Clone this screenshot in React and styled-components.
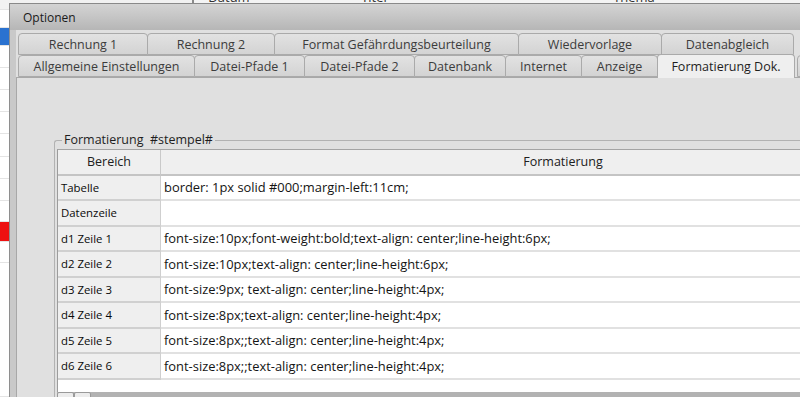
import React from 'react';
import styled, { createGlobalStyle } from 'styled-components';

const Global = createGlobalStyle`
  html, body { margin: 0; padding: 0; }
  body {
    width: 800px; height: 397px; overflow: hidden; background: #fff;
    font-family: "Open Sans", "Liberation Sans", sans-serif;
  }
  #root { width: 800px; height: 397px; position: relative; overflow: hidden; }
`;

const Desktop = styled.div`
  display: flex;
  width: 800px;
  height: 397px;
  background: #fff;
`;

const SideList = styled.div`
  width: 192px;
  display: flex;
  flex-direction: column;
  border-right: 2px solid #8a8a8a;
`;

const ListRow = styled.div`
  height: ${p => p.h}px;
  flex: none;
  box-sizing: border-box;
  background: ${p => (p.tone === 'blue' ? '#2a72d0' : p.tone === 'red' ? '#ee1111' : p.tone === 'head' ? '#f2f2f2' : '#fff')};
  border-bottom: 1px solid #e4e4e4;
`;

const MainTable = styled.div`
  flex: 1;
  display: flex;
  flex-direction: column;
`;

const MainHeader = styled.div`
  height: 4px;
  overflow: hidden;
  display: flex;
  align-items: flex-end;
  border-bottom: 1px solid #9a9a9a;
  background: #f4f4f4;
`;

const MainHeaderCell = styled.span`
  flex: none;
  width: ${p => p.w}px;
  text-align: center;
  font-size: 13px;
  line-height: 14px;
  color: #333;
`;

const Dialog = styled.div`
  position: absolute;
  left: 9px;
  top: 3px;
  width: 840px;
  height: 440px;
  display: flex;
  flex-direction: column;
  background: #e0e0e0;
  border-left: 1px solid #8e8e8e;
  border-top: 1px solid #8a8a8a;
`;

const TitleBar = styled.div`
  height: 26px;
  flex: none;
  display: flex;
  align-items: center;
  padding-left: 13px;
  background: linear-gradient(#d4d4d4, #b6b6b6);
  font-size: 12px;
  color: #1a1a1a;
`;

const DialogBody = styled.div`
  flex: 1;
  display: flex;
  flex-direction: column;
  padding-top: 3px;
  border-left: 6px solid #c9c9c9;
`;

const TabRow = styled.div`
  display: flex;
  height: 22px;
  flex: none;
  padding-left: 2px;
  align-items: flex-end;
`;

const Tab = styled.div`
  flex: none;
  box-sizing: border-box;
  width: ${p => p.w}px;
  height: ${p => (p.active ? 24 : 22)}px;
  margin-right: -1px;
  margin-bottom: ${p => (p.active ? -1 : 0)}px;
  border: 1px solid #aaaaaa;
  border-bottom: ${p => (p.active ? 'none' : '1px solid #aaaaaa')};
  border-radius: 4px 4px 0 0;
  background: ${p => (p.active ? '#efefef' : 'linear-gradient(#e2e2e2, #d3d3d3)')};
  position: relative;
  z-index: ${p => (p.active ? 2 : 1)};
  display: flex;
  align-items: center;
  justify-content: center;
  font-size: 12.5px;
  color: ${p => (p.active ? '#1e1e1e' : '#3c3c3c')};
  white-space: nowrap;
  overflow: hidden;
`;

const Spacer = styled.div`
  width: ${p => p.w}px;
  flex: none;
`;

const Pane = styled.div`
  flex: 1;
  border-top: 1px solid #a8a8a8;
  border-left: 1px solid #a8a8a8;
  background: #e0e0e0;
  padding: 54px 0 0 37px;
`;

const Group = styled.fieldset`
  margin: 0;
  padding: 1px 0 0 2px;
  border: 1px solid #b2b2b2;
  border-right: none;
  border-radius: 3px 0 0 0;
  min-width: 0;
`;

const GroupTitle = styled.legend`
  margin-left: 5px;
  padding: 0 2px;
  font-size: 12.5px;
  line-height: 16px;
  color: #1e1e1e;
  white-space: pre;
`;

const Grid = styled.div`
  width: 908px;
  display: grid;
  grid-template-columns: 103px 805px;
  grid-auto-rows: 25.5px;
  background: #fff;
  border-top: 1px solid #a4a4a4;
  border-left: 1px solid #9c9c9c;
`;

const HeadCell = styled.div`
  box-sizing: border-box;
  background: #efefef;
  border-right: 1px solid #c9c9c9;
  border-bottom: 2px solid #c4c4c4;
  display: flex;
  align-items: center;
  justify-content: center;
  font-size: 12.5px;
  color: #202020;
`;

const KeyCell = styled.div`
  box-sizing: border-box;
  background: #efefef;
  border-right: 1px solid #cfcfcf;
  border-bottom: 2px solid #d0d0d0;
  display: flex;
  align-items: center;
  padding-left: 3px;
  font-size: 11.4px;
  color: #0a0a0a;
  white-space: nowrap;
`;

const ValueCell = styled.div`
  box-sizing: border-box;
  background: #fff;
  border-bottom: 2px solid #e1e1e1;
  display: flex;
  align-items: center;
  padding-left: 3px;
  font-size: 12.9px;
  color: #141414;
  white-space: nowrap;
`;

const Filler = styled.div`
  height: 12px;
  width: 908px;
  background: #fff;
  border-left: 1px solid #9c9c9c;
`;

const ButtonBar = styled.div`
  display: flex;
  height: 20px;
  background: #b2b2b2;
  width: 909px;
`;

const SmallButton = styled.button`
  width: 17px;
  height: 20px;
  padding: 0;
  margin: 0;
  border: 1px solid #9a9a9a;
  border-radius: 2px;
  background: #ececec;
  font-family: "Open Sans", sans-serif;
  font-size: 12px;
  line-height: 12px;
  color: #222;
`;

const rows1 = [
  ['Rechnung 1', 130],
  ['Rechnung 2', 128],
  ['Format Gefährdungsbeurteilung', 245],
  ['Wiedervorlage', 144],
  ['Datenabgleich', 133],
];

const rows2 = [
  ['Allgemeine Einstellungen', 177],
  ['Datei-Pfade 1', 111],
  ['Datei-Pfade 2', 111],
  ['Datenbank', 92],
  ['Internet', 77],
  ['Anzeige', 77],
  ['Formatierung Dok.', 138, true],
];

const data = [
  ['Tabelle', 'border: 1px solid #000;margin-left:11cm;'],
  ['Datenzeile', ''],
  ['d1 Zeile 1', 'font-size:10px;font-weight:bold;text-align: center;line-height:6px;'],
  ['d2 Zeile 2', 'font-size:10px;text-align: center;line-height:6px;'],
  ['d3 Zeile 3', 'font-size:9px; text-align: center;line-height:4px;'],
  ['d4 Zeile 4', 'font-size:8px;text-align: center;line-height:4px;'],
  ['d5 Zeile 5', 'font-size:8px;;text-align: center;line-height:4px;'],
  ['d6 Zeile 6', 'font-size:8px;;text-align: center;line-height:4px;'],
];

const listRows = [
  [10, 'head'], [18], [18, 'blue'], [22], [22], [22], [22], [23], [22], [22], [21], [20, 'red'], [21], [134],
];

export default function App() {
  return (
    <>
      <Global />
      <Desktop>
        <SideList>
          {listRows.map(([h, tone], i) => (
            <ListRow key={i} h={h} tone={tone} />
          ))}
        </SideList>
        <MainTable>
          <MainHeader>
            <MainHeaderCell w={70}>Datum</MainHeaderCell>
            <MainHeaderCell w={220}>Titel</MainHeaderCell>
            <MainHeaderCell w={300}>Thema</MainHeaderCell>
          </MainHeader>
        </MainTable>
      </Desktop>
      <Dialog>
        <TitleBar>Optionen</TitleBar>
        <DialogBody>
          <TabRow>
            {rows1.map(([t, w]) => (
              <Tab key={t} w={w}>{t}</Tab>
            ))}
          </TabRow>
          <TabRow>
            {rows2.map(([t, w, a]) => (
              <Tab key={t} w={w} active={a}>{t}</Tab>
            ))}
            <Spacer w={3} />
            <Tab w={60}>Drucken</Tab>
          </TabRow>
          <Pane>
            <Group>
              <GroupTitle>{'Formatierung  #stempel#'}</GroupTitle>
              <Grid>
                <HeadCell>Bereich</HeadCell>
                <HeadCell>Formatierung</HeadCell>
                {data.map(([k, v]) => (
                  <React.Fragment key={k}>
                    <KeyCell>{k}</KeyCell>
                    <ValueCell>{v}</ValueCell>
                  </React.Fragment>
                ))}
              </Grid>
              <Filler />
              <ButtonBar>
                <SmallButton>+</SmallButton>
                <SmallButton>−</SmallButton>
              </ButtonBar>
            </Group>
          </Pane>
        </DialogBody>
      </Dialog>
    </>
  );
}
